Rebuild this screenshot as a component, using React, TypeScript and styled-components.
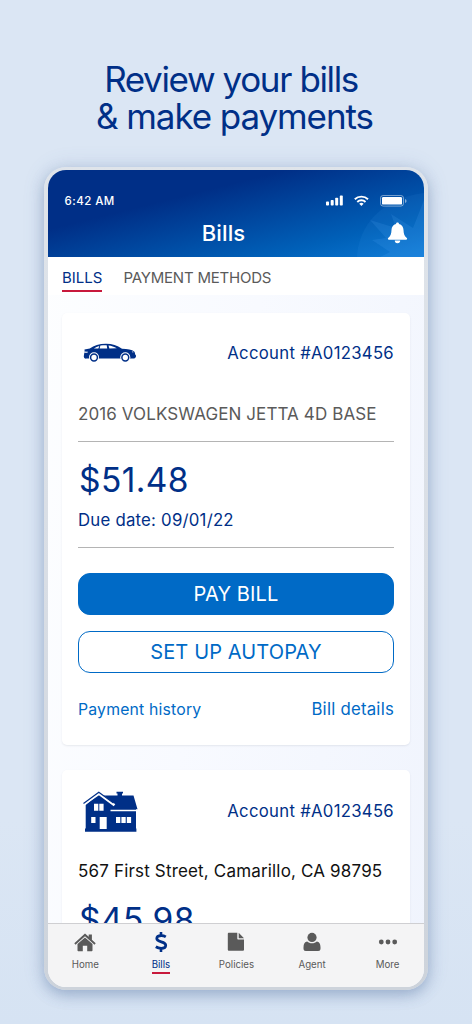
import React from "react";
import styled, { createGlobalStyle } from "styled-components";

const navy = "#002f87";
const blue = "#006ac6";
const gray = "#5a5a5a";
const red = "#c8193c";

const GlobalStyle = createGlobalStyle`
  * { box-sizing: border-box; }
  body {
    margin: 0;
    background: #dbe6f4;
    font-family: Inter, "Liberation Sans", sans-serif;
  }
`;

const Page = styled.main`
  width: 472px;
  height: 1024px;
  padding-top: 61px;
  overflow: hidden;
  display: flex;
  flex-direction: column;
  align-items: center;
  background: linear-gradient(#dbe6f4 0%, #dbe6f4 80%, #d6e3f3 100%);
`;

const Headline = styled.h1`
  margin: 0;
  height: 106px;
  display: flex;
  flex-direction: column;
  align-items: center;
  font-size: 35px;
  line-height: 36.5px;
  font-weight: 400;
  color: ${navy};
  white-space: nowrap;
`;

const HeadLine = styled.span<{ $spacing: number; $shift: number }>`
  letter-spacing: ${(p) => p.$spacing}px;
  margin-right: ${(p) => p.$shift}px;
`;

const Phone = styled.div`
  width: 384px;
  height: 823px;
  flex: none;
  padding: 3px 4px;
  border-radius: 22px;
  background: linear-gradient(#dfe4ea, #d9dee5 50%, #cdd3db);
  box-shadow: 0 5px 14px rgba(70, 100, 150, 0.36), 0 0 22px rgba(90, 120, 170, 0.16);
`;

const Screen = styled.div`
  height: 817px;
  border-radius: 18px;
  overflow: hidden;
  display: flex;
  flex-direction: column;
  background: linear-gradient(100deg, #fdfeff 0%, #f8faff 45%, #f0f4fd 100%);
`;

const Header = styled.header`
  position: relative;
  height: 87px;
  flex: none;
  overflow: hidden;
  color: #fff;
  background: linear-gradient(166deg, #002f87 0%, #002f87 33%, #0060b8 78%, #0a78d4 100%);
`;

const Rays = styled.svg`
  position: absolute;
  right: 0;
  top: 0;
`;

const StatusBar = styled.div`
  position: relative;
  display: flex;
  align-items: center;
  height: 20px;
  margin-top: 21px;
  padding: 0 17px 0 16.5px;
`;

const Clock = styled.span`
  flex: 1;
  font-size: 11.5px;
  font-weight: 500;
  letter-spacing: 0.45px;
`;

const TitleRow = styled.div`
  position: relative;
  display: grid;
  grid-template-columns: 1fr auto 1fr;
  align-items: center;
  height: 44px;
  padding: 0 16px;
`;

const ScreenTitle = styled.h2`
  grid-column: 2;
  margin: 0 25px 0 0;
  font-size: 22px;
  line-height: 44px;
  font-weight: 450;
  letter-spacing: 0.15px;
`;

const BellSlot = styled.span`
  justify-self: end;
  display: flex;
`;

const Tabs = styled.nav`
  height: 38px;
  flex: none;
  display: flex;
  gap: 21px;
  padding: 10px 14px 0;
  background: #fff;
`;

const Tab = styled.span<{ $active?: boolean }>`
  height: 25px;
  font-size: 15px;
  line-height: 21px;
  letter-spacing: ${(p) => (p.$active ? 0 : -0.21)}px;
  white-space: nowrap;
  color: ${(p) => (p.$active ? navy : gray)};
  border-bottom: 2px solid ${(p) => (p.$active ? red : "transparent")};
`;

const Content = styled.section`
  flex: 1;
  min-height: 0;
  overflow: hidden;
  display: flex;
  flex-direction: column;
  gap: 25px;
  padding: 18px 14px 0;
`;

const Card = styled.article`
  height: 432px;
  flex: none;
  padding: 0 16px;
  border-radius: 5px;
  background: #fff;
  box-shadow: 0 1px 2px rgba(60, 70, 90, 0.1);
`;

const CardTop = styled.div<{ $height: number }>`
  display: flex;
  justify-content: space-between;
  align-items: center;
  height: ${(p) => p.$height}px;
  padding-left: 5px;
`;

const Line = styled.div<{
  $size: number;
  $height: number;
  $color?: string;
  $spacing?: number;
}>`
  font-size: ${(p) => p.$size}px;
  line-height: ${(p) => p.$height}px;
  letter-spacing: ${(p) => p.$spacing ?? 0}px;
  color: ${(p) => p.$color ?? navy};
  white-space: nowrap;
`;

const Amount = styled.div<{ $top: number }>`
  padding: ${(p) => p.$top}px 0 0 1px;
  font-size: 33.5px;
  line-height: 47px;
  letter-spacing: 0.4px;
  color: ${navy};
`;

const Rule = styled.hr<{ $above: number; $below: number }>`
  height: 1px;
  margin: ${(p) => p.$above}px 0 ${(p) => p.$below}px;
  border: 0;
  background: #b4b4b4;
`;

const Button = styled.button<{ $primary?: boolean }>`
  display: block;
  width: 100%;
  height: 42px;
  padding: 0;
  border: 1.5px solid ${blue};
  border-radius: 12px;
  font: 400 20px / 39px Inter, sans-serif;
  letter-spacing: 0.12px;
  color: ${(p) => (p.$primary ? "#fff" : blue)};
  background: ${(p) => (p.$primary ? blue : "#fff")};
  & + & { margin-top: 16px; }
`;

const Links = styled.div`
  display: flex;
  justify-content: space-between;
  margin-top: 26px;
`;

const TabBar = styled.footer`
  height: 64px;
  flex: none;
  display: flex;
  margin: 0 -1.5px 0 -0.5px;
  border-top: 1px solid #cfcfd2;
  background: #f4f4f5;
`;

const TabItem = styled.div<{ $active?: boolean }>`
  flex: 1;
  display: flex;
  flex-direction: column;
  align-items: center;
  color: ${(p) => (p.$active ? navy : gray)};
`;

const TabIcon = styled.span`
  height: 34px;
  padding-top: 2px;
  display: flex;
  align-items: center;
`;

const TabLabel = styled.span<{ $active?: boolean }>`
  height: 16px;
  font-size: 9.7px;
  line-height: 13px;
  border-bottom: 2px solid ${(p) => (p.$active ? red : "transparent")};
`;

const StatusIcons = () => (
  <svg width="82" height="14" viewBox="325 194 82 14" fill="#fff">
    <rect x="326" y="201.6" width="3" height="4" rx="0.8" />
    <rect x="330.7" y="200" width="3" height="5.6" rx="0.8" />
    <rect x="335.2" y="197.8" width="3" height="7.8" rx="0.8" />
    <rect x="339.8" y="195.6" width="3" height="10" rx="0.8" />
    <g fill="none" stroke="#fff" strokeWidth="1.9">
      <path d="M354.8 199.3a9.4 9.4 0 0 1 13.2 0" />
      <path d="M357.3 202a5.8 5.8 0 0 1 8.2 0" />
    </g>
    <path d="M359.2 203.7a3.2 3.2 0 0 1 4.4 0l-2.2 2.3z" />
    <rect x="380.5" y="195.5" width="23" height="10.6" rx="2.6" fill="none" stroke="#fff" strokeOpacity=".45" />
    <rect x="382" y="197" width="20" height="7.6" rx="1.2" />
    <path d="M405 199v4q1.6-.6 1.6-2t-1.6-2z" opacity=".5" />
  </svg>
);

const Bell = () => (
  <svg width="21" height="22" viewBox="0 0 21 22" fill="#fff">
    <path d="M10.5.6c1 0 1.5.7 1.5 1.5 3 .7 4.4 3 4.5 6 .1 3.9.9 6 3.3 8 .7.7.3 1.7-.7 1.7H1.9c-1 0-1.4-1-.7-1.7 2.4-2 3.2-4.1 3.3-8 .1-3 1.5-5.3 4.5-6 0-.8.5-1.5 1.5-1.5z" />
    <path d="M7.8 18.5h5.4a2.7 2.7 0 0 1-5.4 0z" />
  </svg>
);

const CarSvg = styled.svg`
  margin-bottom: 0;
`;

const Car = () => (
  <CarSvg width="54" height="20" viewBox="0 0 54 20">
    <path
      fill={navy}
      d="M1.5 6.6 6.800 5.600C11 2.500 16 .7 23 .7c6.500 0 11 1.700 16 5.100 5.500.4 10 1 12.200 2.700.7.8.9 1.800.9 2.800l.9 1.300c.2 1.600-.7 2.900-2.200 3H3.500C1.700 15.800.8 14.900.8 13.200L1.600 8z"
    />
    <path
      fill="#fff"
      d="M10.800 5.600c2-1.500 3.600-2.300 5.500-2.700L15.400 5.600zM17.400 2.600c2.200-.4 4.500-.5 6.300-.4l.5 3.200-7.600.2zM25.500 2.400c3 .2 5.700 1.200 8.300 2.900l-7.400.2zM1.300 8.500l3.700.2-.6 1-3.200.1zM48.700 8.200l2.200.9-1.300.4z"
    />
    <circle cx="11" cy="14.300" r="5" fill="#fff" />
    <circle cx="42.300" cy="14.300" r="5" fill="#fff" />
    <circle cx="11" cy="14.500" r="3.400" fill="#fff" stroke={navy} strokeWidth="1.500" />
    <circle cx="42.300" cy="14.500" r="3.400" fill="#fff" stroke={navy} strokeWidth="1.500" />
  </CarSvg>
);

const HouseSvg = styled.svg`
  margin-top: 1px;
`;

const House = () => (
  <HouseSvg width="56" height="42" viewBox="0 0 56 42">
    <path fill={navy} d="M16 3 20 4.500H34.500V2.600h-1V.8h6.500v1.800h-1v1.900h11.500L54.500 18.300H53V37.600h.4v3.200H2v-3.200h.7V14z" />
    <path d="M1 13 16 2.600 31.500 14.300" fill="none" stroke="#fff" strokeWidth="2.600" />
    <path d="M.5 12.600 15.800 1.300 30.500 12" fill="none" stroke={navy} strokeWidth="1.200" />
    <path stroke="#fff" strokeWidth="1.500" d="M27.500 19.500H54" />
    <g fill="#fff">
      <path d="M11 12.800h4.300v7H11zM16.300 12.800h4.300v7h-4.300zM8.200 26h4.300v6H8.200zM16.700 26h7v12h-7zM33 26h4.300v6H33zM38.400 26h4.300v6h-4.300zM43.800 26h4.300v6h-4.300z" />
    </g>
  </HouseSvg>
);

const HomeIcon = () => (
  <svg width="22" height="19" viewBox="0 0 22 19" fill="currentColor">
    <path d="M11 .5 14.700 3.800V1.500h3.200v5.200L21.700 10.300l-1.200 1.400L11 3.300 1.500 11.700.3 10.300z" />
    <path d="M11 4.500 18.500 11.100V17.200c0 .7-.4 1.100-1.100 1.100h-4.200v-5.500H8.800v5.500H4.600c-.7 0-1.100-.4-1.100-1.100v-6.100z" />
  </svg>
);

const DollarIcon = () => (
  <svg width="14" height="22" viewBox="0 0 14 22" fill="none" stroke="currentColor" strokeWidth="2.800">
    <path d="M7 1v3.500M7 17.500V21" strokeWidth="2.600" />
    <path d="M11.800 5.900C10.500 5.100 9 4.700 7.200 4.700c-2.700 0-4.400 1.100-4.400 2.900 0 4.200 8.900 2.400 8.900 6.600 0 2-1.800 3.100-4.500 3.100-2 0-3.900-.6-5.400-1.500" />
  </svg>
);

const PolicyIcon = () => (
  <svg width="18" height="20" viewBox="0 0 18 20" fill="currentColor">
    <path d="M2 .8h8.300v5.700c0 .7.4 1.100 1.100 1.100H17v9.900c0 .8-.5 1.300-1.300 1.300H2.100c-.8 0-1.300-.5-1.300-1.300V2C.8 1.200 1.200.8 2 .8zM11.700.8 17 6.200h-5.300z" />
  </svg>
);

const AgentIcon = () => (
  <svg width="18" height="20" viewBox="0 0 18 20" fill="currentColor">
    <circle cx="9" cy="5.400" r="4.600" />
    <path d="M4.200 9.500C5.500 10.700 7 11.300 9 11.300s3.500-.6 4.800-1.800c2.500.4 3.700 2.500 3.700 5.800v1.200c0 1.700-.8 2.500-2.300 2.500H2.800C1.300 19 .5 18.200.5 16.500v-1.200c0-3.300 1.200-5.400 3.700-5.800z" />
  </svg>
);

const MoreIcon = () => (
  <svg width="20" height="6" viewBox="0 0 20 6" fill="currentColor">
    <circle cx="3.300" cy="3" r="2.400" />
    <circle cx="10" cy="3" r="2.400" />
    <circle cx="16.700" cy="3" r="2.400" />
  </svg>
);

const tabs = [
  { label: "Home", icon: <HomeIcon /> },
  { label: "Bills", icon: <DollarIcon />, active: true },
  { label: "Policies", icon: <PolicyIcon /> },
  { label: "Agent", icon: <AgentIcon /> },
  { label: "More", icon: <MoreIcon /> },
];

export default function App() {
  return (
    <Page>
      <GlobalStyle />
      <Headline>
        <HeadLine $spacing={-1.38} $shift={10}>Review your bills</HeadLine>
        <HeadLine $spacing={-1.1} $shift={3}>&amp; make payments</HeadLine>
      </Headline>
      <Phone>
        <Screen>
          <Header>
            <Rays width="70" height="87" viewBox="354 170 70 87" fill="#5cb4ff">
              <path opacity=".08" d="M357 257C358 228 380 198 424 193V257z" />
              <path opacity=".14" d="M424 200 413 228 391 214 396 228 370 220 386 238 372 240 390 252 380 257H424z" />
            </Rays>
            <StatusBar>
              <Clock>6:42 AM</Clock>
              <StatusIcons />
            </StatusBar>
            <TitleRow>
              <ScreenTitle>Bills</ScreenTitle>
              <BellSlot><Bell /></BellSlot>
            </TitleRow>
          </Header>
          <Tabs>
            <Tab $active>BILLS</Tab>
            <Tab>PAYMENT METHODS</Tab>
          </Tabs>
          <Content>
            <Card>
              <CardTop $height={80}>
                <Car />
                <Line $size={16.7} $height={40} $spacing={0.3}>Account #A0123456</Line>
              </CardTop>
              <Line $size={17} $height={42} $spacing={0.1} $color={gray}>2016 VOLKSWAGEN JETTA 4D BASE</Line>
              <Rule $above={6} $below={0} />
              <Amount $top={15}>$51.48</Amount>
              <Line $size={16.8} $height={33} $spacing={0.22}>Due date: 09/01/22</Line>
              <Rule $above={10} $below={25} />
              <Button $primary>PAY BILL</Button>
              <Button>SET UP AUTOPAY</Button>
              <Links>
                <Line $size={15.8} $height={21} $spacing={0.18} $color={blue}>Payment history</Line>
                <Line $size={16.8} $height={20} $spacing={0.22} $color={blue}>Bill details</Line>
              </Links>
            </Card>
            <Card>
              <CardTop $height={82}>
                <House />
                <Line $size={16.7} $height={40} $spacing={0.3}>Account #A0123456</Line>
              </CardTop>
              <Line $size={17} $height={39} $spacing={0.17} $color="#111">567 First Street, Camarillo, CA 98795</Line>
              <Amount $top={6}>$45.98</Amount>
            </Card>
          </Content>
          <TabBar>
            {tabs.map((t) => (
              <TabItem key={t.label} $active={t.active}>
                <TabIcon>{t.icon}</TabIcon>
                <TabLabel $active={t.active}>{t.label}</TabLabel>
              </TabItem>
            ))}
          </TabBar>
        </Screen>
      </Phone>
    </Page>
  );
}
